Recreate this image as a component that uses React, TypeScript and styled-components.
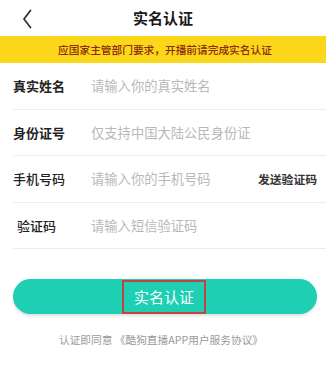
import React from "react";
import styled, { createGlobalStyle } from "styled-components";

const Global = createGlobalStyle`
  html, body { margin: 0; padding: 0; background: #fff; }
  body { font-family: "Noto Sans CJK SC", "Noto Sans", sans-serif; -webkit-font-smoothing: antialiased; }
  * { box-sizing: border-box; }
`;

const Page = styled.div`
  width: 326px;
  height: 388px;
  background: #fff;
  display: flex;
  flex-direction: column;
  overflow: hidden;
`;

const Header = styled.div`
  height: 36px;
  display: grid;
  grid-template-columns: 60px 1fr 60px;
  align-items: center;
`;

const Back = styled.div`
  padding-left: 22px;
  padding-top: 1px;
  display: flex;
  align-items: center;
`;

const Title = styled.div`
  text-align: center;
  font-size: 15px;
  font-weight: 700;
  color: #1a1a1a;
  line-height: 20px;
  margin-top: -1px;
`;

const Banner = styled.div`
  height: 27px;
  background: #fbd719;
  color: #8a2a10;
  font-size: 10.7px;
  font-weight: 500;
  display: flex;
  align-items: center;
  justify-content: center;
  padding-left: 4px;
`;

const Form = styled.div`
  padding-left: 13px;
`;

const Row = styled.div`
  height: 46.5px;
  display: flex;
  align-items: center;
  border-bottom: 1px solid #ececec;
`;

const Label = styled.div<{ $bold?: boolean; $indent?: number }>`
  width: 78px;
  padding-left: ${(p) => p.$indent ?? 0}px;
  font-size: 13px;
  font-weight: ${(p) => (p.$bold ? 700 : 500)};
  color: #222;
  flex-shrink: 0;
`;

const Placeholder = styled.div`
  flex: 1;
  font-size: 13.3px;
  color: #b8b8b8;
`;

const SendCode = styled.div`
  font-size: 11.8px;
  font-weight: 700;
  color: #333;
  padding-right: 9px;
`;

const ButtonWrap = styled.div`
  padding: 30px 9px 0 13px;
`;

const SubmitButton = styled.div`
  height: 35px;
  border-radius: 18px;
  background: #1ecfb4;
  box-shadow: 0 2px 3px rgba(0, 0, 0, 0.12);
  display: flex;
  align-items: center;
  justify-content: center;
`;

const Highlight = styled.div`
  width: 84px;
  height: 34px;
  border: 2px solid #c0453e;
  display: flex;
  align-items: center;
  justify-content: center;
  color: #fff;
  font-size: 15px;
  font-weight: 400;
  margin-left: -2px;
`;

const Footer = styled.div`
  margin-top: 18px;
  text-align: center;
  font-size: 10.7px;
  color: #9a9a9a;
  padding-right: 4px;
`;

const rows = [
  { label: "真实姓名", placeholder: "请输入你的真实姓名", bold: true },
  { label: "身份证号", placeholder: "仅支持中国大陆公民身份证", bold: true },
  { label: "手机号码", placeholder: "请输入你的手机号码", send: true },
  { label: "验证码", placeholder: "请输入短信验证码", indent: 4 },
];

export default function App() {
  return (
    <Page>
      <Global />
      <Header>
        <Back>
          <svg width="10" height="20" viewBox="0 0 10 20">
            <path d="M8.5 1.5 L2 10 L8.5 18.5" fill="none" stroke="#333" strokeWidth="1.8" strokeLinecap="round" strokeLinejoin="round" />
          </svg>
        </Back>
        <Title>实名认证</Title>
        <div />
      </Header>
      <Banner>应国家主管部门要求，开播前请完成实名认证</Banner>
      <Form>
        {rows.map((r) => (
          <Row key={r.label}>
            <Label $bold={r.bold} $indent={r.indent}>{r.label}</Label>
            <Placeholder>{r.placeholder}</Placeholder>
            {r.send && <SendCode>发送验证码</SendCode>}
          </Row>
        ))}
      </Form>
      <ButtonWrap>
        <SubmitButton>
          <Highlight>实名认证</Highlight>
        </SubmitButton>
      </ButtonWrap>
      <Footer>认证即同意 《酷狗直播APP用户服务协议》</Footer>
    </Page>
  );
}
